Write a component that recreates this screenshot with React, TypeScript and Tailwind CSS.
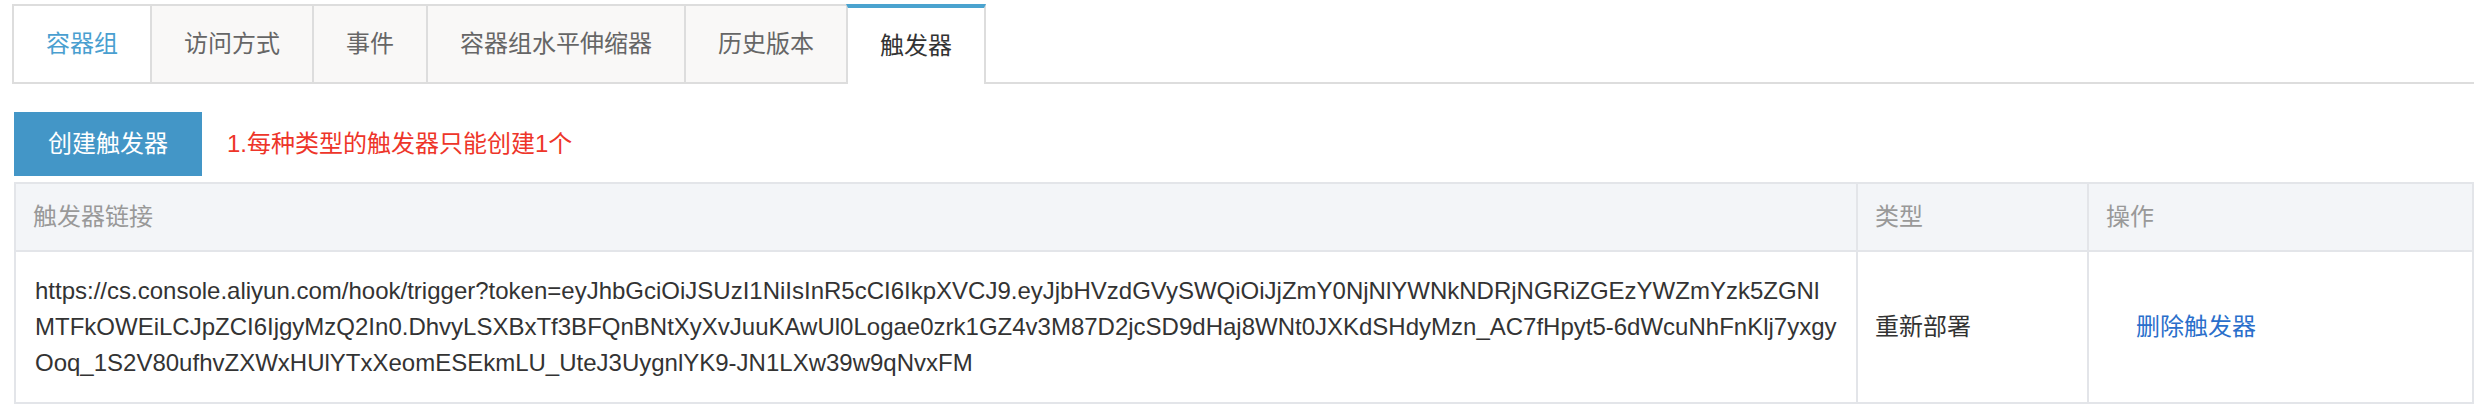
import { useState } from "react";

const tabs = ["容器组", "访问方式", "事件", "容器组水平伸缩器", "历史版本", "触发器"];

const triggerLines = [
  "https://cs.console.aliyun.com/hook/trigger?token=eyJhbGciOiJSUzI1NiIsInR5cCI6IkpXVCJ9.eyJjbHVzdGVySWQiOiJjZmY0NjNlYWNkNDRjNGRiZGEzYWZmYzk5ZGNl",
  "MTFkOWEiLCJpZCI6IjgyMzQ2In0.DhvyLSXBxTf3BFQnBNtXyXvJuuKAwUl0Logae0zrk1GZ4v3M87D2jcSD9dHaj8WNt0JXKdSHdyMzn_AC7fHpyt5-6dWcuNhFnKlj7yxgy",
  "Ooq_1S2V80ufhvZXWxHUlYTxXeomESEkmLU_UteJ3UygnlYK9-JN1LXw39w9qNvxFM",
];

export default function App() {
  const [active, setActive] = useState(5);

  return (
    <div className="min-h-[418px] bg-white pt-[4px] text-[24px] font-['Liberation_Sans','Noto_Sans_CJK_SC',sans-serif]">
      {/* Tabs */}
      <div className="ml-[12px] mr-[10px] flex border-b-2 border-[#ddd]">
        {tabs.map((t, i) =>
          i === active ? (
            <button
              key={t}
              onClick={() => setActive(i)}
              className="-mb-[2px] flex h-[80px] items-center border-x-2 border-t-4 border-[#ddd] border-t-[#4aa3cf] bg-white px-8 text-[#333]"
            >
              {t}
            </button>
          ) : (
            <button
              key={t}
              onClick={() => setActive(i)}
              className={
                "flex h-[78px] items-center border-l-2 border-t-2 border-[#ddd] px-8 " +
                (i === 0 ? "bg-white text-[#4a9fd0]" : "bg-[#f9f8f7] text-[#666]")
              }
            >
              {t}
            </button>
          )
        )}
      </div>

      {/* Toolbar */}
      <div className="ml-[14px] mt-[28px] flex items-center">
        <button className="h-[64px] bg-[#4396c7] px-[34px] text-white">创建触发器</button>
        <span className="ml-[25px] text-[#ee3529]">1.每种类型的触发器只能创建1个</span>
      </div>

      {/* Table */}
      <div className="ml-[14px] mr-[10px] mt-[6px] border-2 border-[#e3e5e9]">
        <div className="flex h-[68px] border-b-2 border-[#e3e5e9] bg-[#f3f5f8] text-[#999]">
          <div className="flex flex-1 items-center px-[17px]">触发器链接</div>
          <div className="flex w-[231px] items-center border-l-2 border-[#e3e5e9] px-[17px]">类型</div>
          <div className="flex w-[385px] items-center border-l-2 border-[#e3e5e9] px-[17px]">操作</div>
        </div>
        <div className="flex text-[#333]">
          <div className="flex-1 px-[19px] py-[21px] leading-[36px]">
            {triggerLines.map((l) => (
              <div key={l} className="whitespace-nowrap">
                {l}
              </div>
            ))}
          </div>
          <div className="flex w-[231px] items-center border-l-2 border-[#e3e5e9] px-[17px]">重新部署</div>
          <div className="flex w-[385px] items-center border-l-2 border-[#e3e5e9] pl-[47px]">
            <a href="#" className="text-[#2a6fcb]">
              删除触发器
            </a>
          </div>
        </div>
      </div>
    </div>
  );
}
